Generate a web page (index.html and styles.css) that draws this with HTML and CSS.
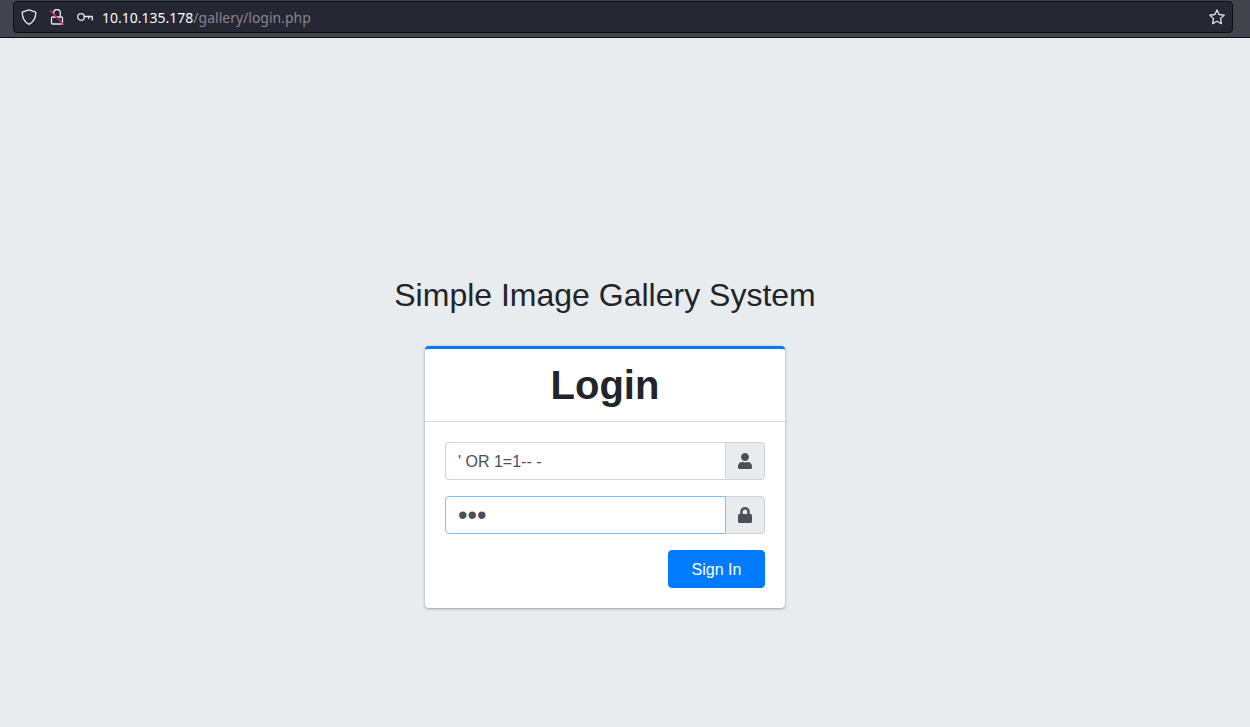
FILE: index.html
```
<!DOCTYPE html>
<html lang="en">
<head>
<meta charset="utf-8">
<title>Simple Image Gallery System</title>
<link rel="stylesheet" href="styles.css">
</head>
<body>
<header class="toolbar">
  <div class="urlbar">
    <svg class="icon" viewBox="0 0 16 16" aria-hidden="true"><path d="M8 .8 14.2 2.8c.5.2.6.5.6.9C14.7 9 12.6 12.900 8 15.300 3.400 12.900 1.300 9 1.200 3.700c0-.4.1-.7.6-.9Z"/></svg>
    <svg class="icon" viewBox="0 0 16 16" aria-hidden="true"><path d="M4.700 5V3.800a3.300 3.300 0 0 1 6.600 0V8M3.500 8h9a1 1 0 0 1 1 1v5a1 1 0 0 1-1 1h-9a1 1 0 0 1-1-1V9a1 1 0 0 1 1-1Z"/><path class="strike" d="M1.500 1.800 14.500 15.500"/></svg>
    <svg class="icon" viewBox="0 0 16 16" aria-hidden="true"><circle cx="4" cy="8" r="3.300"/><path d="M7.300 7.500H15.300M11.800 7.500V9.500M15.300 7.500V11"/></svg>
    <div class="address"><span class="host">10.10.135.178</span>/gallery/login.php</div>
    <button class="bookmark" type="button" aria-label="Bookmark this page">
      <svg class="icon" viewBox="0 0 16 16" aria-hidden="true"><path d="m8 .9 2.100 4.600 5.100.6-3.700 3.500.9 5.100L8 12.300l-4.400 2.400.9-5.100L.8 6.100l5.100-.6Z"/></svg>
    </button>
  </div>
</header>
<main class="page">
  <h2 class="title">Simple Image Gallery System</h2>
  <section class="card">
    <div class="card-header"><h1 class="heading">Login</h1></div>
    <form class="card-body">
      <div class="group">
        <input class="field" id="username" type="text" value="' OR 1=1-- -" aria-label="Username">
        <label class="addon" for="username"><svg class="glyph" viewBox="0 0 448 512" aria-hidden="true"><path d="M224 256c70.700 0 128-57.300 128-128S294.700 0 224 0 96 57.300 96 128s57.300 128 128 128zm89.600 32h-16.700c-22.200 10.200-46.900 16-72.900 16s-50.600-5.800-72.900-16h-16.700C60.200 288 0 348.200 0 422.400V464c0 26.500 21.500 48 48 48h352c26.500 0 48-21.500 48-48v-41.600c0-74.200-60.200-134.400-134.400-134.400z"/></svg></label>
      </div>
      <div class="group">
        <input class="field active" id="password" type="password" value="123" aria-label="Password">
        <label class="addon" for="password"><svg class="glyph" viewBox="0 0 448 512" aria-hidden="true"><path d="M400 224h-24v-72C376 68.200 307.800 0 224 0S72 68.200 72 152v72H48c-26.500 0-48 21.500-48 48v192c0 26.500 21.500 48 48 48h352c26.500 0 48-21.500 48-48V272c0-26.500-21.500-48-48-48zm-104 0H152v-72c0-39.700 32.300-72 72-72s72 32.300 72 72v72z"/></svg></label>
      </div>
      <button class="submit" type="submit">Sign In</button>
    </form>
  </section>
</main>
</body>
</html>
```
FILE: styles.css
```
* {
  box-sizing: border-box;
}

body {
  display: flex;
  flex-direction: column;
  min-height: 100vh;
  margin: 0;
  background: #e9ecef;
  color: #212529;
  font-family: "Liberation Sans", Arial, sans-serif;
  font-size: 16px;
  line-height: 24px;
}

.toolbar {
  padding: 1px 17px 4px 13px;
  background: #42444c;
  border-bottom: 1px solid #0e0f13;
}

.urlbar {
  display: flex;
  align-items: center;
  gap: 12px;
  height: 32px;
  padding: 0 7px;
  background: #252733;
  border: 1px solid #0e0f13;
  border-radius: 4px;
}

.icon {
  display: block;
  flex: none;
  width: 16px;
  height: 16px;
  fill: none;
  stroke: #e6e6ec;
  stroke-width: 1.3;
  stroke-linecap: round;
  stroke-linejoin: round;
}

.strike {
  stroke: #e22850;
}

.address {
  flex: 1;
  padding-top: 2px;
  margin-left: -3px;
  color: #85868e;
  font-family: "Noto Sans", sans-serif;
  font-size: 14px;
}

.host {
  color: #fbfbfe;
}

.bookmark {
  padding: 0;
  background: none;
  border: 0;
}

.page {
  display: flex;
  flex: 1;
  flex-direction: column;
  align-items: center;
  justify-content: center;
  padding: 118px 40px 0 0;
}

.title {
  margin: 0 0 32px;
  font-size: 32px;
  font-weight: 400;
  line-height: 38px;
  text-align: center;
}

.card {
  width: 360px;
  max-width: 90%;
  background: #fff;
  border-top: 3px solid #007bff;
  border-radius: 4px;
  box-shadow: 0 0 1px rgba(0, 0, 0, 0.3), 0 1px 3px rgba(0, 0, 0, 0.3);
}

.card-header {
  padding: 12px 20px;
  border-bottom: 1px solid #dadbdc;
  text-align: center;
}

.heading {
  margin: 0;
  font-size: 40px;
  line-height: 48px;
}

.card-body {
  display: flex;
  flex-direction: column;
  gap: 16px;
  padding: 20px;
}

.group {
  display: flex;
  height: 38px;
}

.field {
  flex: 1;
  min-width: 0;
  padding: 7px 12px 5px;
  background: #fff;
  border: 1px solid #ced4da;
  border-right: 0;
  border-radius: 4px 0 0 4px;
  color: #495057;
  font: inherit;
  outline: 0;
}

.field.active {
  padding: 2px 12px 0;
  border: 1px solid #80bdff;
  font-size: 27px;
}

.addon {
  display: flex;
  align-items: center;
  justify-content: center;
  width: 40px;
  background: #e9ecef;
  border: 1px solid #ced4da;
  border-radius: 0 4px 4px 0;
}

.active + .addon {
  width: 39px;
  border-left: 0;
}

.glyph {
  display: block;
  width: 14px;
  height: 16px;
  fill: #495057;
}

.submit {
  align-self: flex-end;
  width: 97px;
  height: 38px;
  padding: 2px 0 0;
  background: #007bff;
  border: 1px solid #007bff;
  border-radius: 4px;
  color: #fff;
  font: inherit;
}
```
